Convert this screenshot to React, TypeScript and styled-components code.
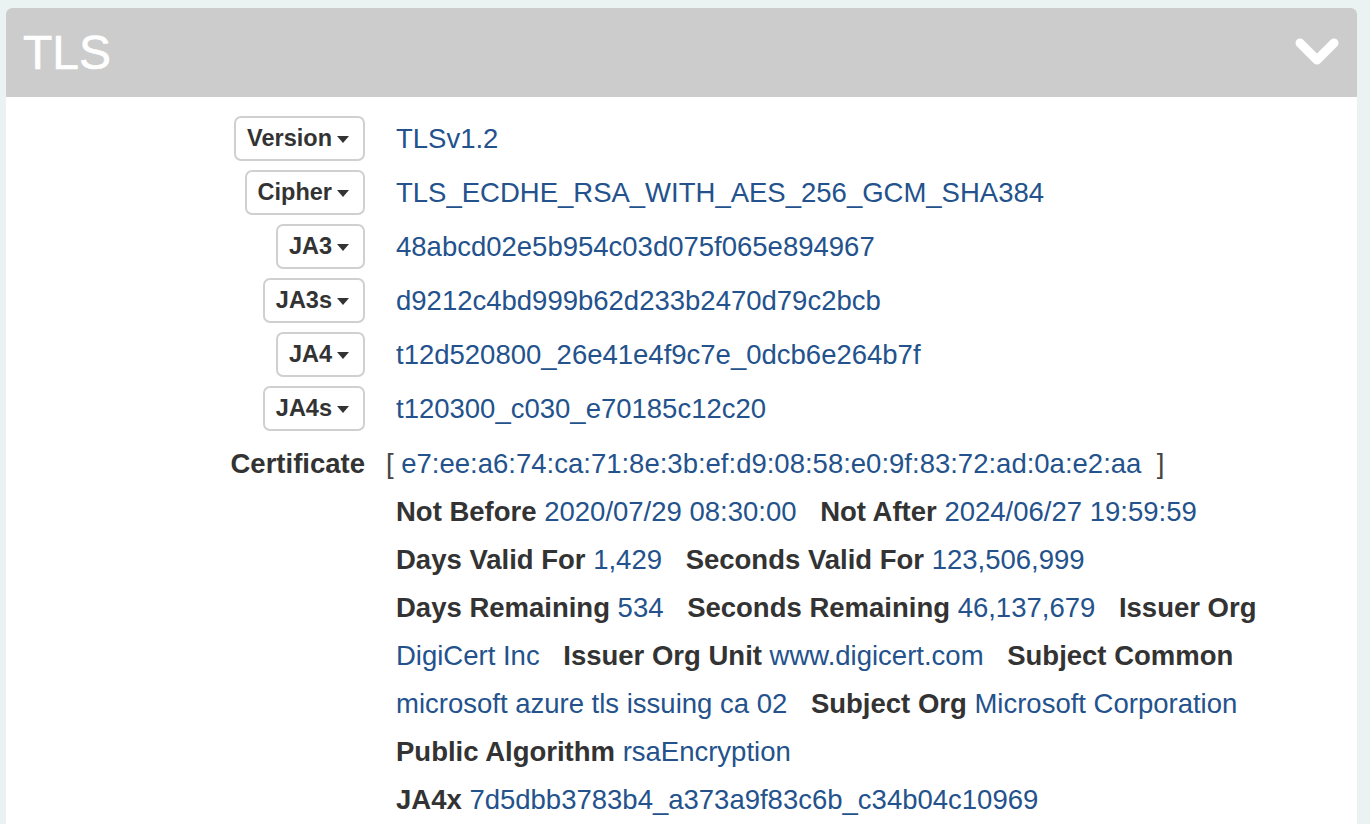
import React from "react";
import styled, { createGlobalStyle } from "styled-components";

const Global = createGlobalStyle`
  html, body { margin: 0; padding: 0; background: #ebf2f2; }
  body { font-family: "Liberation Sans", Arial, Helvetica, sans-serif; color: #333; }
`;

const Page = styled.div`
  padding: 8px 13px 0 6px;
  height: 824px;
  box-sizing: border-box;
  overflow: hidden;
`;

const Panel = styled.section`
  background: #fff;
  border-radius: 6px 6px 0 0;
  overflow: hidden;
  min-height: 900px;
`;

const Header = styled.header`
  height: 89px;
  background: #cccccc;
  display: flex;
  align-items: center;
  justify-content: space-between;
  padding: 0 18px 0 17px;
`;

const Title = styled.h2`
  margin: 0;
  font-size: 48px;
  font-weight: 400;
  color: #fff;
  -webkit-text-stroke: 0.6px #fff;
`;

const Body = styled.div`
  padding-top: 19px;
`;

const Grid = styled.dl`
  margin: 0;
  display: grid;
  grid-template-columns: 359px 1fr;
  column-gap: 21px;
  row-gap: 9px;
  align-items: center;
`;

const Term = styled.dt<{ $top?: boolean }>`
  display: flex;
  justify-content: flex-end;
  align-self: ${(p) => (p.$top ? "start" : "center")};
  font-weight: 700;
  font-size: 27.5px;
  line-height: 48px;
  color: #333;
`;

const Def = styled.dd<{ $indent?: number }>`
  margin: 0;
  padding-left: ${(p) => p.$indent ?? 0}px;
  font-size: 27.5px;
  line-height: 45px;
  color: #23528c;
`;

const DropButton = styled.button`
  display: inline-flex;
  align-items: center;
  gap: 5px;
  height: 45px;
  box-sizing: border-box;
  padding: 0 14px 0 11px;
  border: 2px solid #d0d0d0;
  border-radius: 7px;
  background: #fff;
  font-family: inherit;
  font-size: 23.5px;
  font-weight: 700;
  color: #333;
`;

const Caret = styled.span`
  width: 0;
  height: 0;
  border-left: 6px solid transparent;
  border-right: 6px solid transparent;
  border-top: 7px solid #333;
  margin-top: 1px;
`;

const Bracket = styled.span`
  color: #444;
`;

const CertLine = styled.div`
  line-height: 48px;
`;

const Details = styled.div`
  padding-left: 10px;
  width: 900px;
  line-height: 48px;
`;

const Label = styled.b`
  font-weight: 700;
  color: #333;
  white-space: nowrap;
`;

const Value = styled.span`
  color: #23528c;
  margin-right: 16px;
  white-space: nowrap;
`;

const Chevron = () => (
  <svg width="44" height="30" viewBox="0 0 44 30">
    <polyline
      points="5,5 22,22 39,5"
      fill="none"
      stroke="#fff"
      strokeWidth="9"
      strokeLinecap="round"
      strokeLinejoin="round"
    />
  </svg>
);

const hashes: [string, string][] = [
  ["Version", "TLSv1.2"],
  ["Cipher", "TLS_ECDHE_RSA_WITH_AES_256_GCM_SHA384"],
  ["JA3", "48abcd02e5b954c03d075f065e894967"],
  ["JA3s", "d9212c4bd999b62d233b2470d79c2bcb"],
  ["JA4", "t12d520800_26e41e4f9c7e_0dcb6e264b7f"],
  ["JA4s", "t120300_c030_e70185c12c20"],
];

const certFields: [string, string][] = [
  ["Not Before", "2020/07/29 08:30:00"],
  ["Not After", "2024/06/27 19:59:59"],
  ["Days Valid For", "1,429"],
  ["Seconds Valid For", "123,506,999"],
  ["Days Remaining", "534"],
  ["Seconds Remaining", "46,137,679"],
  ["Issuer Org", "DigiCert Inc"],
  ["Issuer Org Unit", "www.digicert.com"],
  ["Subject Common", "microsoft azure tls issuing ca 02"],
  ["Subject Org", "Microsoft Corporation"],
  ["Public Algorithm", "rsaEncryption"],
];

export default function App() {
  return (
    <>
      <Global />
      <Page>
        <Panel>
          <Header>
            <Title>TLS</Title>
            <Chevron />
          </Header>
          <Body>
            <Grid>
              {hashes.map(([k, v]) => (
                <React.Fragment key={k}>
                  <Term>
                    <DropButton type="button">
                      {k}
                      <Caret />
                    </DropButton>
                  </Term>
                  <Def $indent={10}>{v}</Def>
                </React.Fragment>
              ))}
              <Term $top>Certificate</Term>
              <Def>
                <CertLine>
                  <Bracket>[</Bracket> e7:ee:a6:74:ca:71:8e:3b:ef:d9:08:58:e0:9f:83:72:ad:0a:e2:aa{" "}
                  <Bracket>&nbsp;]</Bracket>
                </CertLine>
                <Details>
                  {certFields.map(([k, v]) => (
                    <React.Fragment key={k}>
                      <Label>{k}</Label> <Value>{v}</Value>{" "}
                    </React.Fragment>
                  ))}
                </Details>
                <Details>
                  <Label>JA4x</Label> <Value>7d5dbb3783b4_a373a9f83c6b_c34b04c10969</Value>
                </Details>
              </Def>
            </Grid>
          </Body>
        </Panel>
      </Page>
    </>
  );
}
